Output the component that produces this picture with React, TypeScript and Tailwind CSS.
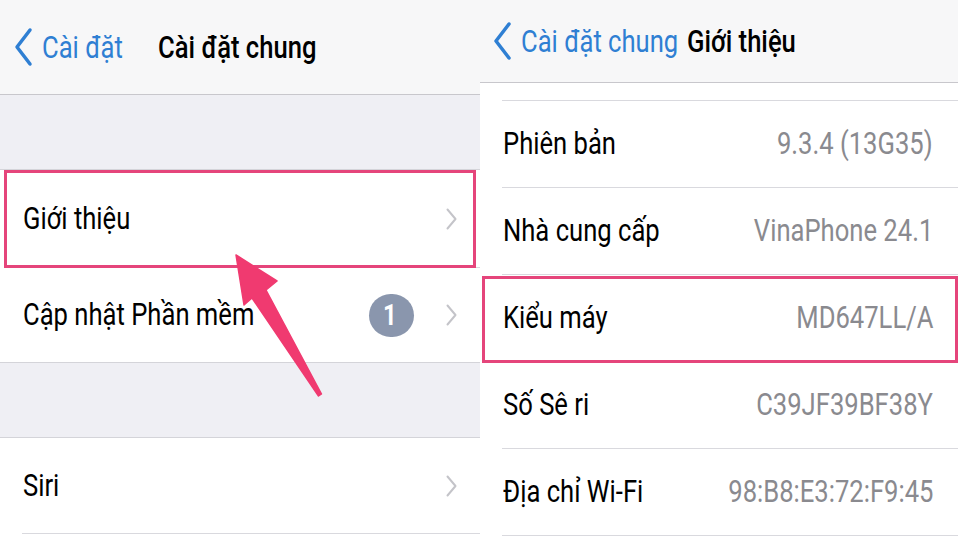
import clsx from "clsx";
import type { ReactNode } from "react";

// iOS text in these captures is narrow and tall, so every label is squeezed horizontally
function Squeeze({ children, className, right }: { children: ReactNode; className?: string; right?: boolean }) {
  return (
    <span
      className={clsx(
        "inline-block whitespace-nowrap scale-x-[0.8] leading-none",
        right ? "origin-right" : "origin-left",
        className,
      )}
    >
      {children}
    </span>
  );
}

function BackChevron() {
  return (
    <svg width="20" height="40" viewBox="0 0 20 40" className="shrink-0">
      <path d="M17 3 L4 20 L17 37" fill="none" stroke="#2f7fd3" strokeWidth="3.5" strokeLinecap="round" strokeLinejoin="round" />
    </svg>
  );
}

function Chevron() {
  return (
    <svg width="11" height="22" viewBox="0 0 11 22" className="shrink-0">
      <path d="M1.5 1.5 L9.5 11 L1.5 20.5" fill="none" stroke="#c4c4c9" strokeWidth="2" strokeLinecap="round" strokeLinejoin="round" />
    </svg>
  );
}

function NavBar({ back, title, height, backWidth, padLeft }: { back: string; title: string; height: string; backWidth: string; padLeft: string }) {
  return (
    <header className={clsx("flex items-center border-b border-[#c8c7cc] bg-[#f7f7f8]", height, padLeft)}>
      <div className={clsx("flex shrink-0 items-center gap-[9px]", backWidth)}>
        <BackChevron />
        <Squeeze className="text-[32px] text-[#2f7fd3]">{back}</Squeeze>
      </div>
      <Squeeze className="text-[32px] font-medium text-black">{title}</Squeeze>
    </header>
  );
}

function LinkRow({ label, height, badge }: { label: string; height: string; badge?: string }) {
  return (
    <div className={clsx("flex items-center bg-white pl-[23px] pr-[23px]", height)}>
      <div className="min-w-0 flex-1">
        <Squeeze className="text-[32px] text-black">{label}</Squeeze>
      </div>
      {badge && (
        <div className="mr-[32px] flex h-[43px] w-[45px] shrink-0 items-center justify-center rounded-full bg-[#8a96ad]">
          <Squeeze className="origin-center text-[30px] font-bold text-white">{badge}</Squeeze>
        </div>
      )}
      <Chevron />
    </div>
  );
}

function InfoRow({ label, value }: { label: string; value: string }) {
  return (
    <>
      <div className="flex h-[86px] items-center pl-[23px] pr-[25px]">
        <div className="min-w-0 flex-1">
          <Squeeze className="text-[32px] text-black">{label}</Squeeze>
        </div>
        <div className="shrink-0">
          <Squeeze right className="text-[32px] text-[#8a8a8f]">{value}</Squeeze>
        </div>
      </div>
      <div className="ml-[22px] h-px bg-[#d9d9de]" />
    </>
  );
}

const INFO = [
  { label: "Phiên bản", value: "9.3.4 (13G35)" },
  { label: "Nhà cung cấp", value: "VinaPhone 24.1" },
  { label: "Kiểu máy", value: "MD647LL/A" },
  { label: "Số Sê ri", value: "C39JF39BF38Y" },
  { label: "Địa chỉ Wi-Fi", value: "98:B8:E3:72:F9:45" },
];

export default function App() {
  return (
    <main className="relative flex h-[540px] w-[960px] overflow-hidden bg-white font-[Roboto,'Liberation_Sans',sans-serif]">
      {/* General settings */}
      <section className="relative flex w-[480px] shrink-0 flex-col bg-[#efeff4]">
        <NavBar back="Cài đặt" title="Cài đặt chung" height="h-[95px]" backWidth="w-[145px]" padLeft="pl-[13px]" />
        <div className="h-[74px]" />
        <div className="h-px bg-[#d4d4d9]" />
        <LinkRow label="Giới thiệu" height="h-[97px]" />
        <div className="bg-white pl-[22px]">
          <div className="h-px bg-[#d9d9de]" />
        </div>
        <LinkRow label="Cập nhật Phần mềm" badge="1" height="h-[94px]" />
        <div className="h-px bg-[#d4d4d9]" />
        <div className="h-[74px]" />
        <div className="h-px bg-[#d4d4d9]" />
        <LinkRow label="Siri" height="h-[95px]" />
        <div className="flex-1 bg-white pl-[22px]">
          <div className="h-px bg-[#d9d9de]" />
        </div>

        <div className="absolute left-[4px] top-[170px] h-[98px] w-[472px] border-[3px] border-[#e5457b]" />
      </section>

      {/* About */}
      <section className="relative flex w-[478px] shrink-0 flex-col bg-white">
        <NavBar back="Cài đặt chung" title="Giới thiệu" height="h-[83px]" backWidth="w-[195px]" padLeft="pl-[12px]" />
        <div className="h-[17px]" />
        <div className="ml-[22px] h-px bg-[#d9d9de]" />
        {INFO.map((row) => (
          <InfoRow key={row.label} label={row.label} value={row.value} />
        ))}

        <div className="absolute left-[2px] top-[276px] h-[87px] w-[476px] border-[3px] border-[#e5457b]" />
      </section>

      {/* pointer arrow */}
      <svg className="pointer-events-none absolute left-0 top-0" width="960" height="540" viewBox="0 0 960 540">
        <polygon
          points="236,255 277,281 266,290 321.5,394 318.5,396 252,298 244,305"
          fill="#f03a70"
          stroke="#f03a70"
          strokeWidth="1.5"
          strokeLinejoin="round"
        />
      </svg>
    </main>
  );
}
